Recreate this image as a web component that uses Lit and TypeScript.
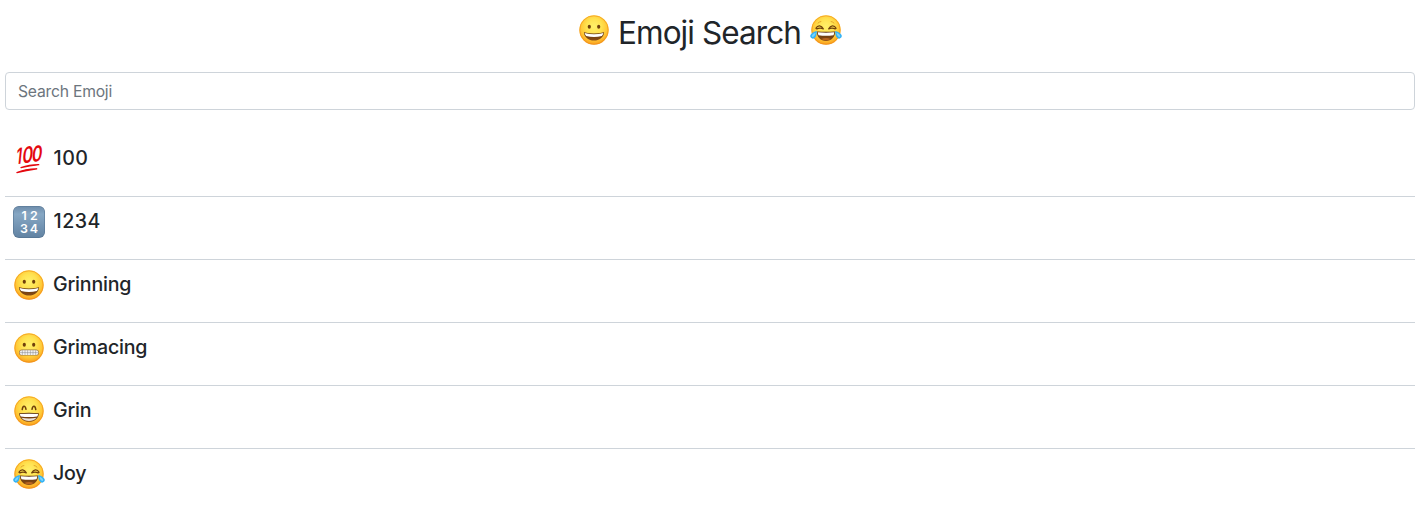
import { LitElement, html, svg, css } from "lit";
import { customElement, property, state } from "lit/decorators.js";

const face = svg`
  <defs>
    <radialGradient id="skin" cx="0.5" cy="0.38" r="0.64">
      <stop offset="0" stop-color="#fff06a"/>
      <stop offset="0.4" stop-color="#ffe250"/>
      <stop offset="0.7" stop-color="#ffc836"/>
      <stop offset="0.9" stop-color="#fba823"/>
      <stop offset="1" stop-color="#ef8a1a"/>
    </radialGradient>
    <linearGradient id="mouth" x1="0" y1="0" x2="0" y2="1">
      <stop offset="0" stop-color="#5c3410"/>
      <stop offset="1" stop-color="#8a4c14"/>
    </linearGradient>
  </defs>
  <circle cx="16" cy="16" r="14.7" fill="url(#skin)"/>
  <circle cx="16" cy="16" r="14.2" fill="none" stroke="#f09018" stroke-opacity="0.6" stroke-width="1"/>`;

const eyes = svg`
  <ellipse cx="11.3" cy="12.7" rx="1.6" ry="2.05" fill="#70400b"/>
  <ellipse cx="20.7" cy="12.7" rx="1.6" ry="2.05" fill="#70400b"/>`;

const drawings: Record<string, unknown> = {
  grinning: svg`${face}${eyes}
    <path d="M5.9 18.3Q16 20.8 26.1 18.3C25.8 23.4 21.4 26.6 16 26.6S6.2 23.4 5.9 18.3Z" fill="url(#mouth)"/>
    <path d="M6.6 19.1Q16 21.5 25.4 19.1C25.2 20.3 24.7 21.2 23.9 22.1Q16 23.9 8.1 22.1C7.3 21.2 6.8 20.3 6.6 19.1Z" fill="#fff"/>`,
  grimacing: svg`${face}${eyes}
    <rect x="6.1" y="17.6" width="19.8" height="6" rx="2.9" fill="#a07a40"/>
    <rect x="6.7" y="18.2" width="18.6" height="4.8" rx="2.3" fill="#f2f2f2"/>
    <path d="M9.4 18.2v4.8M12 18.2v4.8M14.6 18.2v4.8M17.4 18.2v4.8M20 18.2v4.8M22.6 18.2v4.8M6.8 20.6h18.4" stroke="#888" stroke-width="0.5" fill="none"/>`,
  grin: svg`${face}
    <path d="M9.2 14.6C9.8 10.3 12.2 10.3 13 14.3M19 14.3C19.8 10.3 22.2 10.3 22.8 14.6" stroke="#70400b" stroke-width="1.5" stroke-linecap="round" fill="none"/>
    <path d="M6.1 18.2Q16 17.5 25.9 18.2C25.8 23.3 21.3 26.8 16 26.8S6.2 23.3 6.1 18.2Z" fill="url(#mouth)"/>
    <path d="M6.9 19.1Q16 18.4 25.1 19.1Q25 20.3 24.3 21.5Q16 22.7 7.7 21.5Q7 20.3 6.9 19.1Z" fill="#fff"/>
    <path d="M8.4 22.8Q16 24 23.6 22.8C21.7 25.2 19 26 16 26S10.3 25.2 8.4 22.8Z" fill="#e9e2d8"/>`,
  joy: svg`${face}
    <path d="M5.9 14.3C7.8 10.9 11.4 11.2 13.3 14.9Q10 13.3 6.8 14.9M26.1 14.3C24.2 10.9 20.6 11.2 18.7 14.9Q22 13.3 25.2 14.9" fill="none" stroke="#70400b" stroke-width="1.25" stroke-linecap="round" stroke-linejoin="round"/>
    <path d="M8 9.1Q9.2 7.8 10.9 7.5M21.1 7.5Q22.8 7.8 24 9.1" stroke="#d99420" stroke-width="0.8" stroke-linecap="round" fill="none"/>
    <path d="M6.9 17.4Q16 18.3 25.1 17.4C25.2 23 21.4 26.9 16 26.9S6.8 23 6.9 17.4Z" fill="url(#mouth)"/>
    <path d="M7.7 18.3Q16 19.2 24.3 18.3Q24.2 20 23.5 21.2Q16 22.3 8.5 21.2Q7.8 20 7.7 18.3Z" fill="#fff"/>
    <path d="M11.4 25.1Q16 23 20.6 25.1Q18.4 26.3 16 26.3T11.4 25.1Z" fill="#b8641f"/>
    <path d="M6.9 16.9C3.6 17.4 0.2 19.9 0.2 22.1C0.3 24.6 3.1 25.5 4.9 23.7C6.4 22.2 6.7 19.9 6.9 16.9Z" fill="#35b3f5"/>
    <path d="M5.6 18.8C3.9 19.3 2 20.8 1.8 22C1.9 23.1 3 23.2 4 22.3C5 21.2 5.3 20.2 5.6 18.8Z" fill="#78d4ff"/>
    <path d="M25.1 16.9C28.4 17.4 31.8 19.9 31.8 22.1C31.7 24.6 28.9 25.5 27.1 23.7C25.6 22.2 25.3 19.9 25.1 16.9Z" fill="#35b3f5"/>
    <path d="M26.4 18.8C28.1 19.3 30 20.8 30.2 22C30.1 23.1 29 23.2 28 22.3C27 21.2 26.7 20.2 26.4 18.8Z" fill="#78d4ff"/>`,
  numbers: svg`
    <defs><linearGradient id="key" x1="0" y1="0" x2="0" y2="1">
      <stop offset="0" stop-color="#6e8dab"/><stop offset="0.25" stop-color="#86a7c4"/><stop offset="1" stop-color="#6283a3"/>
    </linearGradient></defs>
    <rect width="32" height="32" rx="6" fill="#557492"/>
    <rect x="0.6" y="0.5" width="30.8" height="30.7" rx="5.5" fill="url(#key)"/>
    <g fill="#fff" font-family="Inter, sans-serif" font-size="12.4" font-weight="600" text-anchor="middle">
      <text x="11" y="14.2">1</text><text x="20.9" y="14.2">2</text>
      <text x="11" y="26.5">3</text><text x="20.9" y="26.5">4</text>
    </g>`,
  hundred: svg`
    <g fill="#e4080f" font-family="Inter, sans-serif" font-weight="600" transform="translate(2.4 21.4) rotate(-8) skewX(-14)">
      <text font-size="22" transform="scale(.64 1)">1</text>
      <text x="8.7" font-size="22" transform="scale(.75 1)">0</text>
      <text x="21.4" font-size="21.5" transform="scale(.75 1)">0</text>
    </g>
    <path d="M8 24.6Q16 21.7 25.8 21.7Q16.5 22.9 8 24.6ZM3.9 29.6Q12 25.9 23.8 25.8Q13 27.2 3.9 29.6Z" fill="#e4080f" stroke="#e4080f" stroke-width="1.2" stroke-linejoin="round"/>`,
};

@customElement("emoji-icon")
class EmojiIcon extends LitElement {
  static styles = css`
    :host { display: block; flex: none; width: 32px; height: 32px; }
    svg { display: block; overflow: visible; }
  `;
  @property() name = "";
  render() {
    return html`<svg width="32" height="32" viewBox="0 0 32 32" aria-hidden="true">${drawings[this.name]}</svg>`;
  }
}

const items = [
  { icon: "hundred", title: "100" },
  { icon: "numbers", title: "1234" },
  { icon: "grinning", title: "Grinning" },
  { icon: "grimacing", title: "Grimacing" },
  { icon: "grin", title: "Grin" },
  { icon: "joy", title: "Joy" },
];

@customElement("app-root")
class AppRoot extends LitElement {
  static styles = css`
    :host {
      display: block;
      box-sizing: border-box;
      height: 510px;
      overflow: hidden;
      padding: 14px 7px 0 5px;
      background: #fff;
      color: #212529;
      font-family: Inter, "Liberation Sans", sans-serif;
    }
    .header { display: flex; justify-content: center; height: 58px; }
    .title { margin: 0 9px 0 8px; font-size: 31.5px; line-height: 37px; font-weight: 400; letter-spacing: -0.91px; white-space: nowrap; }
    .search {
      display: block;
      box-sizing: border-box;
      width: 100%;
      height: 38px;
      padding: 6px 12px;
      border: 1px solid #ced4da;
      border-radius: 4px;
      background: #fff;
      color: #495057;
      font: 400 15.7px/24px Inter, "Liberation Sans", sans-serif;
      letter-spacing: -0.22px;
      outline: none;
    }
    .search::placeholder { color: #6c757d; opacity: 1; }
    .list { padding-top: 24px; }
    .row {
      display: flex;
      gap: 8px;
      box-sizing: border-box;
      height: 63px;
      padding: 9px 8px;
      border-bottom: 1px solid #ced4da;
    }
    .name { font-size: 19.6px; line-height: 31px; font-weight: 500; letter-spacing: -0.2px; }
    .digits { padding-left: 0.5px; letter-spacing: 0.5px; }
  `;
  @state() query = "";
  render() {
    const q = this.query.toLowerCase();
    return html`
      <header class="header">
        <emoji-icon name="grinning"></emoji-icon>
        <h2 class="title">Emoji Search</h2>
        <emoji-icon name="joy"></emoji-icon>
      </header>
      <input class="search" placeholder="Search Emoji"
        @input=${(e: Event) => (this.query = (e.target as HTMLInputElement).value)} />
      <div class="list">
        ${items.filter((i) => i.title.toLowerCase().includes(q)).map(
          (i) => html`<div class="row"><emoji-icon name=${i.icon}></emoji-icon><span class="name ${/^\d+$/.test(i.title) ? "digits" : ""}">${i.title}</span></div>`
        )}
      </div>
    `;
  }
}
